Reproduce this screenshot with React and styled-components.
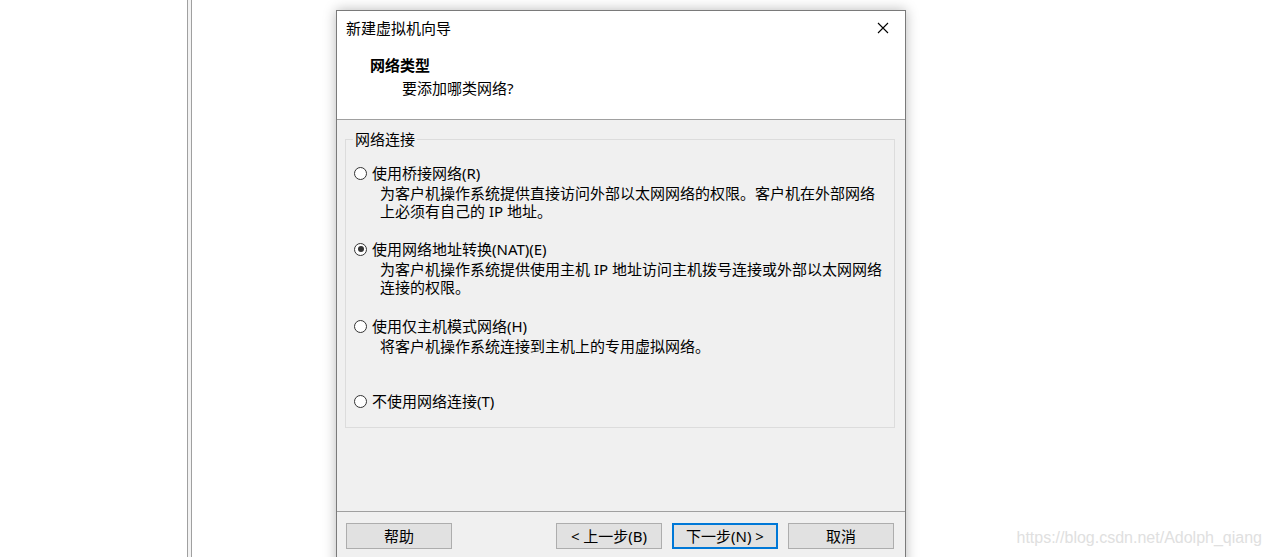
import React from 'react'
import styled, { createGlobalStyle } from 'styled-components'

const GlobalStyle = createGlobalStyle`
  html, body {
    margin: 0;
    padding: 0;
    background: #fff;
  }
  body {
    font-family: "Noto Sans", "Noto Sans CJK SC", sans-serif;
    font-size: 15px;
    color: #000;
  }
`

const options = [
  {
    id: 'bridge',
    label: '使用桥接网络(R)',
    desc: ['为客户机操作系统提供直接访问外部以太网网络的权限。客户机在外部网络', '上必须有自己的 IP 地址。'],
    gap: 14,
  },
  {
    id: 'nat',
    label: '使用网络地址转换(NAT)(E)',
    desc: ['为客户机操作系统提供使用主机 IP 地址访问主机拨号连接或外部以太网网络', '连接的权限。'],
    gap: 19,
    checked: true,
  },
  {
    id: 'host',
    label: '使用仅主机模式网络(H)',
    desc: ['将客户机操作系统连接到主机上的专用虚拟网络。'],
    gap: 20,
  },
  {
    id: 'none',
    label: '不使用网络连接(T)',
    desc: [],
    gap: 36,
  },
]

export default function App () {
  return (
    <>
      <GlobalStyle />
      <Page>
        <SideFrame />
        <Dialog>
          <Header>
            <TitleBar>
              <TitleText>新建虚拟机向导</TitleText>
              <CloseButton>
                <svg width="12" height="12" viewBox="0 0 12 12">
                  <path d="M1 1 L11 11 M11 1 L1 11" stroke="#000" strokeWidth="1.1" fill="none" />
                </svg>
              </CloseButton>
            </TitleBar>
            <StepTitle>网络类型</StepTitle>
            <StepSubtitle>要添加哪类网络?</StepSubtitle>
          </Header>

          <Body>
            <GroupBox>
              <Legend>网络连接</Legend>
              {options.map((opt) => (
                <Option key={opt.id} $gap={opt.gap}>
                  <OptionRow>
                    <Radio $checked={opt.checked} />
                    <span>{opt.label}</span>
                  </OptionRow>
                  {opt.desc.map((line, i) => (
                    <DescLine key={i}>{line}</DescLine>
                  ))}
                </Option>
              ))}
            </GroupBox>
          </Body>

          <Footer>
            <Button>帮助</Button>
            <Spacer />
            <Button>&lt; 上一步(B)</Button>
            <Button $primary>下一步(N) &gt;</Button>
            <Button>取消</Button>
          </Footer>
        </Dialog>
        <Watermark>https://blog.csdn.net/Adolph_qiang</Watermark>
      </Page>
    </>
  )
}

const Page = styled.div`
  position: relative;
  width: 1271px;
  height: 557px;
  overflow: hidden;
  display: flex;
  align-items: flex-start;
`

const SideFrame = styled.div`
  margin-left: 187px;
  width: 3px;
  height: 557px;
  border-left: 1px solid #a0a0a0;
  border-right: 1px solid #a0a0a0;
  background: #f3f3f3;
  flex-shrink: 0;
`

const Dialog = styled.div`
  margin-left: 144px;
  margin-top: 10px;
  width: 568px;
  height: 560px;
  flex-shrink: 0;
  border: 1px solid #7a7a7a;
  background: #f0f0f0;
  box-shadow: 0 0 12px rgba(0, 0, 0, 0.28);
  display: flex;
  flex-direction: column;
`

const Header = styled.div`
  height: 109px;
  box-sizing: border-box;
  background: #fff;
  border-bottom: 1px solid #a0a0a0;
`

const TitleBar = styled.div`
  display: flex;
  align-items: center;
  justify-content: space-between;
  padding: 7px 16px 0 9px;
  height: 20px;
`

const TitleText = styled.div`
  line-height: 20px;
`

const CloseButton = styled.div`
  display: flex;
  align-items: center;
  width: 12px;
  height: 12px;
`

const StepTitle = styled.div`
  margin: 17px 0 0 33px;
  font-weight: bold;
  line-height: 20px;
`

const StepSubtitle = styled.div`
  margin: 3px 0 0 65px;
  line-height: 20px;
`

const Body = styled.div`
  height: 391px;
  padding: 9px 10px 0 8px;
  box-sizing: border-box;
`

const GroupBox = styled.fieldset`
  margin: 0;
  padding: 0 0 15px 8px;
  border: 1px solid #dcdcdc;
  height: 299px;
  box-sizing: border-box;
`

const Legend = styled.legend`
  margin-left: -1px;
  padding: 0 2px;
  line-height: 20px;
`

const Option = styled.div`
  margin-top: ${(p) => p.$gap}px;
`

const OptionRow = styled.div`
  display: flex;
  align-items: center;
  gap: 5px;
  line-height: 20px;
  height: 20px;
  margin-bottom: 1px;
`

const Radio = styled.span`
  position: relative;
  width: 13px;
  height: 13px;
  box-sizing: border-box;
  border-radius: 50%;
  border: 1px solid #333;
  background: #fff;
  flex-shrink: 0;

  &::after {
    content: '';
    display: ${(p) => (p.$checked ? 'block' : 'none')};
    position: absolute;
    left: 2.5px;
    top: 2.5px;
    width: 6px;
    height: 6px;
    border-radius: 50%;
    background: #333;
  }
`

const DescLine = styled.div`
  margin-left: 26px;
  line-height: 18px;
`

const Footer = styled.div`
  border-top: 1px solid #a0a0a0;
  display: flex;
  gap: 10px;
  padding: 11px 11px 0 9px;
`

const Spacer = styled.div`
  flex: 1;
`

const Button = styled.div`
  width: 106px;
  height: 26px;
  box-sizing: border-box;
  display: flex;
  align-items: center;
  justify-content: center;
  background: #e1e1e1;
  border: ${(p) => (p.$primary ? '2px solid #0078d7' : '1px solid #adadad')};
  line-height: 20px;
`

const Watermark = styled.div`
  position: absolute;
  right: 9px;
  bottom: 9px;
  font-family: "Liberation Sans", Arial, sans-serif;
  font-size: 16px;
  color: #e0e0e0;
  line-height: 20px;
`
